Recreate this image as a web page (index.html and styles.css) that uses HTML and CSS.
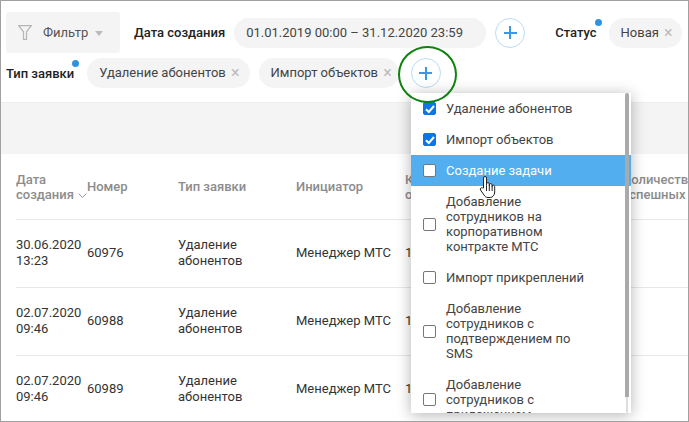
FILE: index.html
```html
<!DOCTYPE html>
<html lang="en">
<head>
  <meta charset="UTF-8">
  <meta name="viewport" content="width=device-width, initial-scale=1.0">
  <title>Заявки</title>
  <link rel="stylesheet" href="styles.css">
</head>
<body>

  <div class="window">
    <div class="filters">
      <div class="filter-row">
        <div class="filter-button">
          <svg class="funnel" width="14" height="15" viewBox="0 0 14 15"><path d="M0.7 0.7H13.300L8.500 6.800V14.300H5.500V6.800Z" fill="none" stroke="#b5b5b5" stroke-width="1.200"/></svg>
          <span>Фильтр</span>
          <span class="caret"></span>
        </div>
        <span class="filter-label date-label">Дата создания</span>
        <div class="pill date-pill">01.01.2019 00:00 – 31.12.2020 23:59</div>
        <div class="plus"></div>
        <span class="filter-label status-label dotted">Статус</span>
        <div class="pill">Новая <span class="close">×</span></div>
      </div>
      <div class="filter-row second">
        <span class="filter-label dotted">Тип заявки</span>
        <div class="pill">Удаление абонентов <span class="close">×</span></div>
        <div class="pill">Импорт объектов <span class="close">×</span></div>
        <div class="plus ringed"></div>
      </div>
    </div>

    <div class="band"></div>

    <div class="table">
      <div class="row head">
        <div class="c1">Дата создания <svg class="sort" width="9" height="5" viewBox="0 0 9 5"><path d="M0.5 0.5L4.5 4.5L8.5 0.5" fill="none" stroke="#999"/></svg></div>
        <div class="c2">Номер</div>
        <div class="c3">Тип заявки</div>
        <div class="c4">Инициатор</div>
        <div class="c5">Количество объектов</div>
        <div class="c6">Количество успешных</div>
      </div>
      <div class="row">
        <div class="c1">30.06.2020 13:23</div>
        <div class="c2">60976</div>
        <div class="c3">Удаление абонентов</div>
        <div class="c4">Менеджер МТС</div>
        <div class="c5">1</div>
        <div class="c6"></div>
      </div>
      <div class="row">
        <div class="c1">02.07.2020 09:46</div>
        <div class="c2">60988</div>
        <div class="c3">Удаление абонентов</div>
        <div class="c4">Менеджер МТС</div>
        <div class="c5">1</div>
        <div class="c6"></div>
      </div>
      <div class="row">
        <div class="c1">02.07.2020 09:46</div>
        <div class="c2">60989</div>
        <div class="c3">Удаление абонентов</div>
        <div class="c4">Менеджер МТС</div>
        <div class="c5">1</div>
        <div class="c6"></div>
      </div>
    </div>

    <div class="dropdown">
      <div class="option"><span class="box checked"><svg width="12" height="12" viewBox="0 0 12 12"><path d="M2 6.2L4.8 9L10 3" fill="none" stroke="#fff" stroke-width="2"/></svg></span>Удаление абонентов</div>
      <div class="option"><span class="box checked"><svg width="12" height="12" viewBox="0 0 12 12"><path d="M2 6.2L4.8 9L10 3" fill="none" stroke="#fff" stroke-width="2"/></svg></span>Импорт объектов</div>
      <div class="option active"><span class="box"></span>Создание задачи</div>
      <div class="option"><span class="box"></span><span class="option-text">Добавление сотрудников на корпоративном контракте МТС</span></div>
      <div class="option"><span class="box"></span>Импорт прикреплений</div>
      <div class="option"><span class="box"></span><span class="option-text">Добавление сотрудников с подтверждением по SMS</span></div>
      <div class="option"><span class="box"></span><span class="option-text">Добавление сотрудников с приложением</span></div>
      <div class="scrollbar"></div>
    </div>

    <svg class="hand" width="20" height="24" viewBox="0 0 20 24">
      <path d="M5.500 13V3a1.500 1.500 0 0 1 3 0v7.500V9a1.400 1.400 0 0 1 2.800 0v2V10a1.400 1.400 0 0 1 2.800 0v1.500V11.500a1.300 1.300 0 0 1 2.600 0V17c0 3-2 5.500-4.500 5.500H10c-2 0-3-1-4-2.500L2.500 15c-1-1.500 1-3 2-2Z" fill="#fff" stroke="#222" stroke-width="1"/>
      <path d="M8.500 11v5M11.300 11v5M14.100 11v5" stroke="#222" stroke-width="1"/>
    </svg>
  </div>

</body>
</html>
```

FILE: styles.css
```css
* {
  margin: 0;
  padding: 0;
  box-sizing: border-box;
}

body {
  font-family: Roboto, 'Liberation Sans', sans-serif;
  font-size: 13px;
  color: #333;
  background: #fff;
}

.window {
  position: relative;
  width: 689px;
  height: 422px;
  overflow: hidden;
  border: 1px solid #a0a0a0;
}

.filters {
  height: 102px;
  padding: 11px 0 0 5px;
  border-bottom: 1px solid #eee;
}

.filter-row {
  display: flex;
  align-items: center;
  white-space: nowrap;
}

.filter-row.second {
  margin-top: 5px;
}

.filter-button {
  width: 114px;
  height: 41px;
  display: flex;
  align-items: center;
  padding-left: 12px;
  background: #f4f4f4;
  border-radius: 3px;
  color: #555;
}

.funnel {
  margin-right: 11px;
}

.caret {
  width: 0;
  height: 0;
  margin-left: 7px;
  margin-top: 2px;
  border: 4.500px solid transparent;
  border-top: 5px solid #bbb;
  border-bottom: 0;
}

.filter-label {
  color: #222;
  font-weight: 500;
  position: relative;
}

.date-label {
  margin-left: 14px;
  margin-right: 9px;
}

.status-label {
  margin-left: 30px;
  margin-right: 12px;
}

.dotted::after {
  content: '';
  position: absolute;
  right: -5px;
  top: -6px;
  width: 7px;
  height: 7px;
  background: #2f94e0;
  border-radius: 50%;
}

.pill {
  height: 30px;
  line-height: 30px;
  padding: 0 9px 0 12px;
  background: #f4f4f4;
  border-radius: 15px;
  color: #444;
  flex-shrink: 0;
}

.second .pill {
  margin-right: 9px;
  padding-right: 10px;
}

.second .pill + .pill {
  padding-right: 7px;
}

.second .filter-label {
  margin-right: 13px;
}

.date-pill {
  width: 252px;
}

.close {
  color: #bbb;
  font-size: 16px;
  margin-left: 2px;
  vertical-align: -1px;
}

.plus {
  position: relative;
  width: 30px;
  height: 30px;
  margin-left: 9px;
  border: 1px solid #b9dcf5;
  border-radius: 50%;
  background: linear-gradient(#3d97e3, #3d97e3) center / 13px 2px no-repeat,
              linear-gradient(#3d97e3, #3d97e3) center / 2px 13px no-repeat;
  flex-shrink: 0;
}

.ringed {
  margin-left: 3px;
}

.ringed::after {
  content: '';
  position: absolute;
  z-index: 2;
  left: -14px;
  top: -13px;
  width: 55px;
  height: 53px;
  border: 2px solid #108010;
  border-radius: 50%;
}

.band {
  height: 51px;
  background: #f4f4f4;
}

.row {
  display: flex;
  align-items: center;
  height: 68px;
  margin-left: 15px;
  padding-bottom: 2px;
  border-bottom: 1px solid #e8e8e8;
  color: #333;
  line-height: 16px;
  overflow: hidden;
}

.row.head {
  height: 66px;
  padding-bottom: 0;
  color: #8c8c8c;
  font-weight: 500;
  line-height: 15px;
}

.c1 { width: 71px; flex-shrink: 0; }
.c2 { width: 91px; flex-shrink: 0; }
.c3 { width: 118px; flex-shrink: 0; padding-right: 30px; }
.c4 { width: 109px; flex-shrink: 0; }
.c5 { width: 218px; flex-shrink: 0; padding-right: 130px; }
.c6 { width: 100px; flex-shrink: 0; }

.sort {
  margin: 0 -1px 1px 1px;
}

.dropdown {
  position: absolute;
  left: 410px;
  top: 92px;
  width: 220px;
  height: 320px;
  overflow: hidden;
  background: #fff;
  box-shadow: 0 2px 14px rgba(0, 0, 0, 0.3);
  line-height: 15px;
  color: #444;
}

.option {
  display: flex;
  align-items: center;
  min-height: 31px;
  padding: 0 40px 0 12px;
}

.option-text {
  padding: 8px 0;
}

.option.active {
  background: #52aeef;
  color: #fff;
}

.box {
  width: 13px;
  height: 13px;
  margin-right: 10px;
  border: 1px solid #767676;
  border-radius: 2px;
  background: #fff;
  flex-shrink: 0;
}

.box.checked {
  background: #0a76e8;
  border-color: #0a76e8;
}

.box svg {
  display: block;
}

.scrollbar {
  position: absolute;
  right: 2px;
  top: 0;
  bottom: 0;
  width: 4px;
  border-radius: 2px;
  background: linear-gradient(#aaa, #aaa) top / 4px 304px no-repeat,
              linear-gradient(#ddd, #ddd) center / 2px 100% no-repeat;
}

.hand {
  position: absolute;
  left: 477px;
  top: 174px;
}
```
